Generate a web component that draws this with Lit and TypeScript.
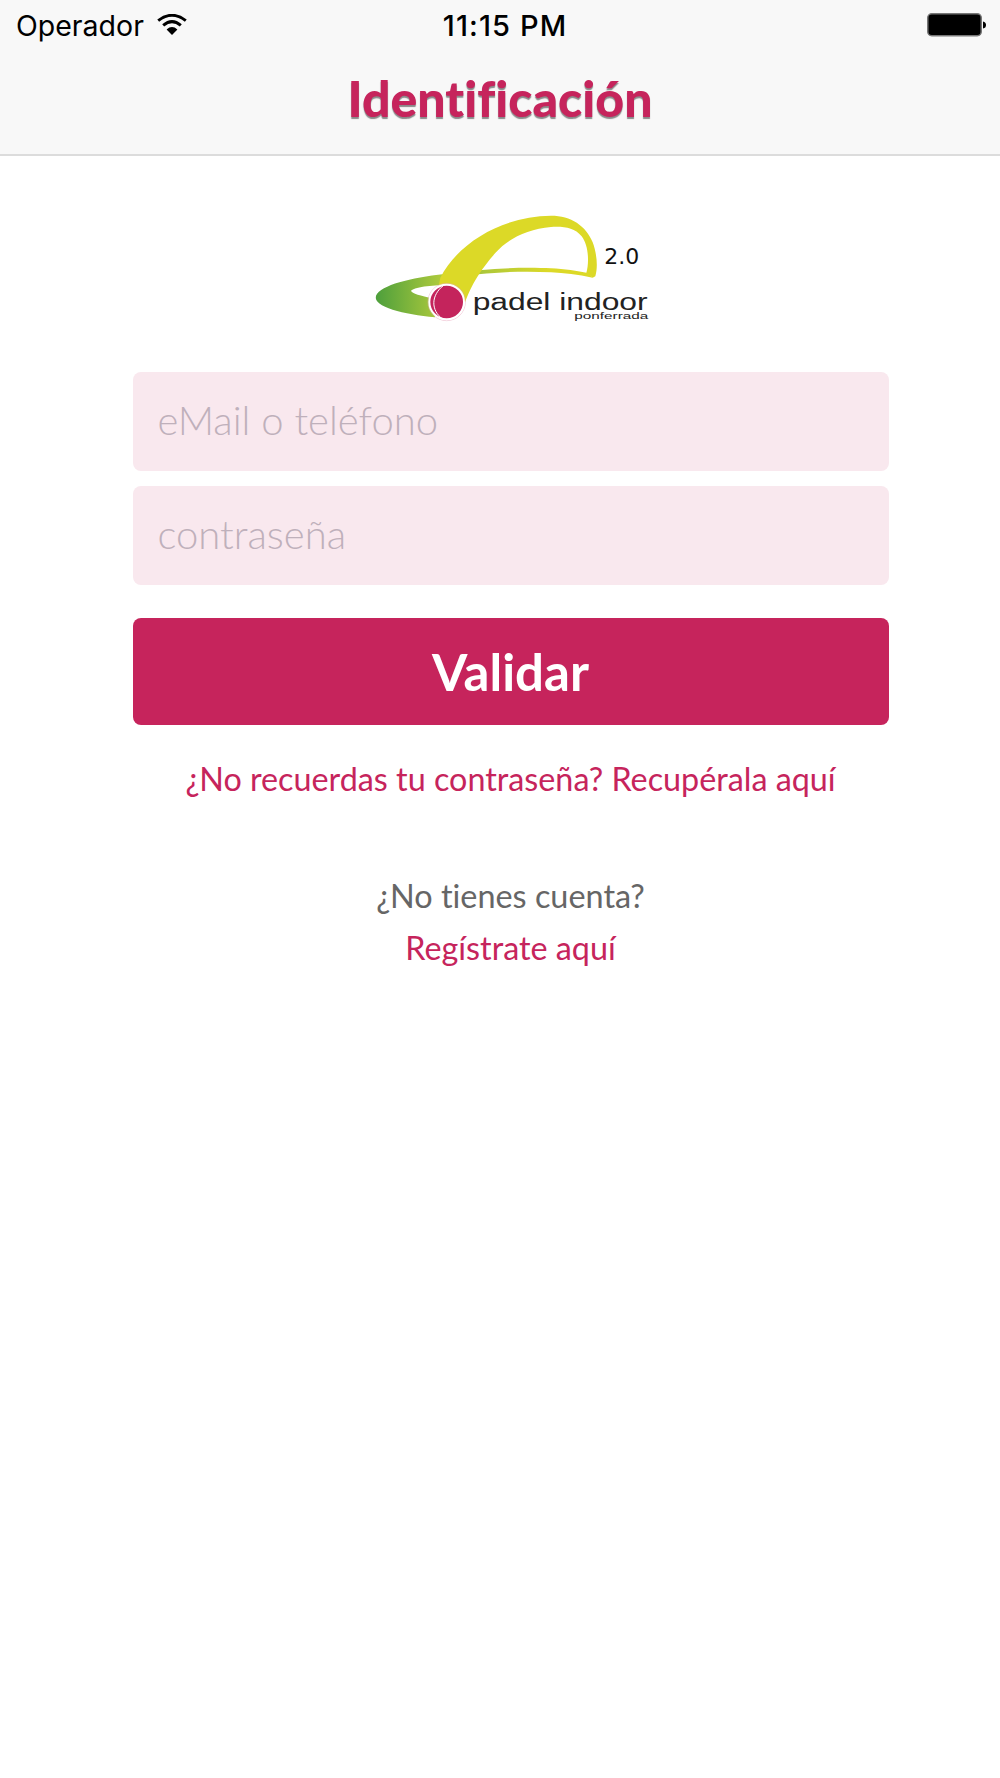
import { LitElement, html, css } from 'lit';
import { customElement } from 'lit/decorators.js';

@customElement('app-root')
export class AppRoot extends LitElement {
  static styles = css`
    :host {
      display: block;
      width: 1000px;
      height: 1778px;
      background: #fff;
      font-family: Lato, 'Open Sans', sans-serif;
      font-variant-ligatures: none;
      overflow: hidden;
    }
    header {
      height: 154px;
      background: #f8f8f8;
      border-bottom: 2px solid #dcdcdc;
    }
    .status {
      display: grid;
      grid-template-columns: 1fr auto 1fr;
      align-items: center;
      height: 50px;
      padding: 0 14px 0 16px;
      font-family: Inter, Roboto, sans-serif;
      font-size: 28.5px;
      color: #000;
    }
    .carrier {
      display: flex;
      align-items: center;
      gap: 13px;
    }
    .time {
      margin-left: 8px;
      font-size: 29px;
      font-weight: 500;
      letter-spacing: 1.1px;
    }
    .battery {
      justify-self: end;
      display: block;
    }
    .title {
      margin: 0;
      padding-top: 13px;
      text-align: center;
      font-size: 50px;
      line-height: 70px;
      font-weight: 900;
      color: #c6245c;
      text-shadow: 0 2px 1px #8a8a8a;
    }
    main {
      display: flex;
      flex-direction: column;
      align-items: center;
      padding: 43px 0 0 21px;
    }
    .logo {
      display: block;
      width: 300px;
      height: 130px;
    }
    form {
      width: 756px;
      margin-top: 43px;
      display: flex;
      flex-direction: column;
    }
    input {
      display: block;
      box-sizing: border-box;
      width: 100%;
      height: 99px;
      margin: 0 0 15px;
      padding: 0 25px 4px;
      border: 0;
      border-radius: 8px;
      background: #f9e8ee;
      font-family: inherit;
      font-size: 40px;
      font-weight: 300;
      outline: none;
    }
    input::placeholder {
      color: #bfb0bb;
      opacity: 1;
    }
    button {
      height: 107px;
      margin-top: 18px;
      border: 0;
      border-radius: 8px;
      background: #c6245c;
      color: #fff;
      font-family: inherit;
      font-size: 51px;
      font-weight: 700;
    }
    .link {
      display: block;
      text-align: center;
      text-decoration: none;
      color: #c6245c;
      font-size: 32.3px;
    }
    .forgot {
      margin-top: 29px;
      line-height: 50px;
    }
    .ask {
      margin: 67px 0 0;
      text-align: center;
      font-size: 32.4px;
      line-height: 50px;
      color: #666;
    }
    .register {
      line-height: 50px;
      margin-top: 2px;
    }
  `;

  render() {
    return html`
      <header>
        <div class="status">
          <div class="carrier">
            <span>Operador</span>
            <svg width="30" height="22" viewBox="0 0 30 22">
              <path d="M15 21 9.6 15.4Q15 10.8 20.4 15.4Z" fill="#000" />
              <path d="M6.2 11.4Q15 3.8 23.8 11.4" fill="none" stroke="#000" stroke-width="3" />
              <path d="M1.2 6.6Q15 -4 28.8 6.6" fill="none" stroke="#000" stroke-width="3" />
            </svg>
          </div>
          <span class="time">11:15 PM</span>
          <svg class="battery" width="59" height="24" viewBox="0 0 59 24">
            <rect x="0.75" y="0.75" width="53.5" height="22" rx="4" fill="#000" stroke="#777" stroke-width="1.5" />
            <path d="M56 8.5Q59 9 59 12Q59 15 56 15.5Z" fill="#000" />
          </svg>
        </div>
        <h1 class="title">Identificación</h1>
      </header>
      <main>
        <svg class="logo" viewBox="0 0 900 390">
          <defs>
            <linearGradient id="ring" x1="0" x2="1" y1="0" y2="0">
              <stop offset="0" stop-color="#4d9f3c" />
              <stop offset="1" stop-color="#b9cf3c" />
            </linearGradient>
            <linearGradient id="band" gradientUnits="userSpaceOnUse" x1="350" x2="560" y1="0" y2="0">
              <stop offset="0" stop-color="#a8c63c" />
              <stop offset="1" stop-color="#dcd927" />
            </linearGradient>
          </defs>
          <path d="M45 290C60 258 150 236 250 225L262 258C225 258 165 262 150 275C152 284 180 290 215 298L222 355C130 345 35 325 45 290Z" fill="url(#ring)" />
          <path d="M355 214C430 206 510 205 570 208C610 210 650 216 680 222L695 236C650 226 610 222 570 220C500 216 430 218 352 226Z" fill="url(#band)" />
          <path d="M238 236C296 125 430 52 570 50C630 50 675 80 695 130C708 165 711 205 703 232L695 236L676 222C685 190 683 140 662 112C640 86 610 82 570 84C500 90 440 120 405 160C385 182 368 205 355 224C338 250 325 275 312 310L232 268Z" fill="#dcd927" />
          <circle cx="257" cy="309" r="56" fill="none" stroke="#e7a3bb" stroke-width="1.5" />
          <circle cx="257" cy="309" r="52" fill="#c4245c" stroke="#fff" stroke-width="6" />
          <path d="M248 259C210 288 208 334 246 361" fill="none" stroke="#fff" stroke-width="3" />
          <text x="335" y="333" font-family="'Liberation Sans', sans-serif" font-size="70" fill="#222" textLength="525" lengthAdjust="spacingAndGlyphs">padel indoor</text>
          <text x="640" y="361" font-family="'Liberation Sans', sans-serif" font-size="28" fill="#222" textLength="222" lengthAdjust="spacingAndGlyphs">ponferrada</text>
          <text x="730" y="195" font-family="'DejaVu Sans', sans-serif" font-size="66" fill="#111">2.0</text>
        </svg>
        <form>
          <input type="text" placeholder="eMail o teléfono" />
          <input type="password" placeholder="contraseña" />
          <button type="button">Validar</button>
          <a class="link forgot" href="#">¿No recuerdas tu contraseña? Recupérala aquí</a>
          <p class="ask">¿No tienes cuenta?</p>
          <a class="link register" href="#">Regístrate aquí</a>
        </form>
      </main>
    `;
  }
}
